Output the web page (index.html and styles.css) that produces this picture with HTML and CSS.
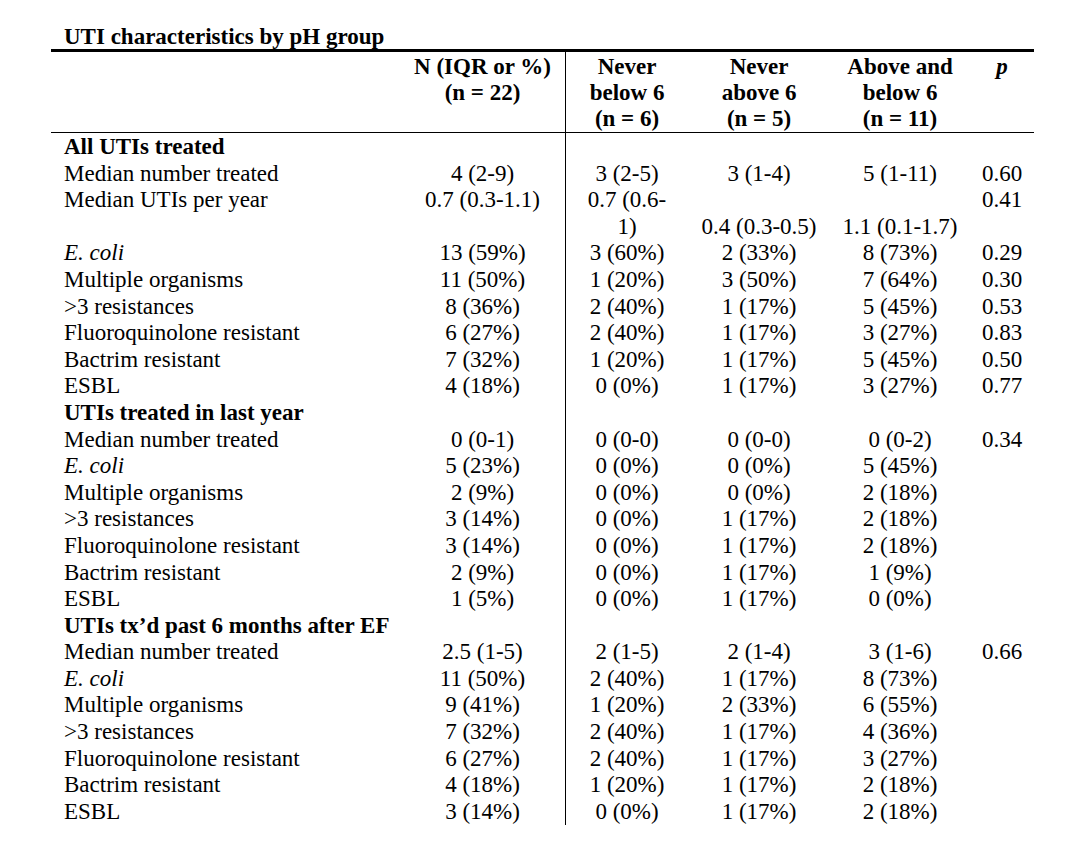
FILE: index.html
```html
<!DOCTYPE html>
<html>
<head>
<meta charset="utf-8">
<link rel="stylesheet" href="styles.css">
</head>
<body>
<div class="page">
  <div class="title">UTI characteristics by pH group</div>
  <table class="uti">
    <colgroup>
      <col class="c-label"><col class="c-n"><col class="c-g1"><col class="c-g2"><col class="c-g3"><col class="c-p">
    </colgroup>
    <thead>
      <tr>
        <th class="lbl"></th>
        <th class="n">N (IQR or %)<br>(n = 22)</th>
        <th>Never<br>below 6<br>(n = 6)</th>
        <th>Never<br>above 6<br>(n = 5)</th>
        <th>Above and<br>below 6<br>(n = 11)</th>
        <th><i>p</i></th>
      </tr>
    </thead>
    <tbody>
      <tr class="sec"><td class="lbl">All UTIs treated</td><td class="n"></td><td></td><td></td><td></td><td></td></tr>
      <tr><td class="lbl">Median number treated</td><td class="n">4 (2-9)</td><td>3 (2-5)</td><td>3 (1-4)</td><td>5 (1-11)</td><td>0.60</td></tr>
      <tr><td class="lbl">Median UTIs per year</td><td class="n">0.7 (0.3-1.1)</td><td>0.7 (0.6-<br>1)</td><td class="bot">0.4 (0.3-0.5)</td><td class="bot">1.1 (0.1-1.7)</td><td>0.41</td></tr>
      <tr><td class="lbl"><i>E. coli</i></td><td class="n">13 (59%)</td><td>3 (60%)</td><td>2 (33%)</td><td>8 (73%)</td><td>0.29</td></tr>
      <tr><td class="lbl">Multiple organisms</td><td class="n">11 (50%)</td><td>1 (20%)</td><td>3 (50%)</td><td>7 (64%)</td><td>0.30</td></tr>
      <tr><td class="lbl">&gt;3 resistances</td><td class="n">8 (36%)</td><td>2 (40%)</td><td>1 (17%)</td><td>5 (45%)</td><td>0.53</td></tr>
      <tr><td class="lbl">Fluoroquinolone resistant</td><td class="n">6 (27%)</td><td>2 (40%)</td><td>1 (17%)</td><td>3 (27%)</td><td>0.83</td></tr>
      <tr><td class="lbl">Bactrim resistant</td><td class="n">7 (32%)</td><td>1 (20%)</td><td>1 (17%)</td><td>5 (45%)</td><td>0.50</td></tr>
      <tr><td class="lbl">ESBL</td><td class="n">4 (18%)</td><td>0 (0%)</td><td>1 (17%)</td><td>3 (27%)</td><td>0.77</td></tr>
      <tr class="sec"><td class="lbl">UTIs treated in last year</td><td class="n"></td><td></td><td></td><td></td><td></td></tr>
      <tr><td class="lbl">Median number treated</td><td class="n">0 (0-1)</td><td>0 (0-0)</td><td>0 (0-0)</td><td>0 (0-2)</td><td>0.34</td></tr>
      <tr><td class="lbl"><i>E. coli</i></td><td class="n">5 (23%)</td><td>0 (0%)</td><td>0 (0%)</td><td>5 (45%)</td><td></td></tr>
      <tr><td class="lbl">Multiple organisms</td><td class="n">2 (9%)</td><td>0 (0%)</td><td>0 (0%)</td><td>2 (18%)</td><td></td></tr>
      <tr><td class="lbl">&gt;3 resistances</td><td class="n">3 (14%)</td><td>0 (0%)</td><td>1 (17%)</td><td>2 (18%)</td><td></td></tr>
      <tr><td class="lbl">Fluoroquinolone resistant</td><td class="n">3 (14%)</td><td>0 (0%)</td><td>1 (17%)</td><td>2 (18%)</td><td></td></tr>
      <tr><td class="lbl">Bactrim resistant</td><td class="n">2 (9%)</td><td>0 (0%)</td><td>1 (17%)</td><td>1 (9%)</td><td></td></tr>
      <tr><td class="lbl">ESBL</td><td class="n">1 (5%)</td><td>0 (0%)</td><td>1 (17%)</td><td>0 (0%)</td><td></td></tr>
      <tr class="sec"><td class="lbl">UTIs tx’d past 6 months after EF</td><td class="n"></td><td></td><td></td><td></td><td></td></tr>
      <tr><td class="lbl">Median number treated</td><td class="n">2.5 (1-5)</td><td>2 (1-5)</td><td>2 (1-4)</td><td>3 (1-6)</td><td>0.66</td></tr>
      <tr><td class="lbl"><i>E. coli</i></td><td class="n">11 (50%)</td><td>2 (40%)</td><td>1 (17%)</td><td>8 (73%)</td><td></td></tr>
      <tr><td class="lbl">Multiple organisms</td><td class="n">9 (41%)</td><td>1 (20%)</td><td>2 (33%)</td><td>6 (55%)</td><td></td></tr>
      <tr><td class="lbl">&gt;3 resistances</td><td class="n">7 (32%)</td><td>2 (40%)</td><td>1 (17%)</td><td>4 (36%)</td><td></td></tr>
      <tr><td class="lbl">Fluoroquinolone resistant</td><td class="n">6 (27%)</td><td>2 (40%)</td><td>1 (17%)</td><td>3 (27%)</td><td></td></tr>
      <tr><td class="lbl">Bactrim resistant</td><td class="n">4 (18%)</td><td>1 (20%)</td><td>1 (17%)</td><td>2 (18%)</td><td></td></tr>
      <tr><td class="lbl">ESBL</td><td class="n">3 (14%)</td><td>0 (0%)</td><td>1 (17%)</td><td>2 (18%)</td><td></td></tr>
    </tbody>
  </table>
</div>
</body>
</html>
```
FILE: styles.css
```css
html, body {
  margin: 0;
  padding: 0;
  background: #ffffff;
}
body {
  font-family: "Liberation Serif", "Times New Roman", serif;
  font-size: 23px;
  color: #000000;
}
.page {
  padding: 25px 0 0 51px;
}
.title {
  font-weight: bold;
  line-height: 24px;
  padding-left: 13px;
}
.uti {
  width: 983px;
  table-layout: fixed;
  border-collapse: separate;
  border-spacing: 0;
  border-top: 3px solid #000;
  line-height: 26.6px;
}
.c-label { width: 349px; }
.c-n { width: 166px; }
.c-g1 { width: 122px; }
.c-g2 { width: 142px; }
.c-g3 { width: 140px; }
.c-p { width: 64px; }
.uti th, .uti td {
  padding: 0;
  text-align: center;
  vertical-align: top;
  white-space: nowrap;
}
.uti th {
  font-weight: bold;
  padding-top: 2px;
  line-height: 26px;
  border-bottom: 1px solid #000;
}
.uti tbody tr:first-child td {
  padding-top: 1px;
}
.uti .lbl {
  text-align: left;
  padding-left: 13px;
}
.uti .n {
  border-right: 1px solid #000;
}
.uti td.bot {
  vertical-align: bottom;
}
.sec .lbl {
  font-weight: bold;
}
```
